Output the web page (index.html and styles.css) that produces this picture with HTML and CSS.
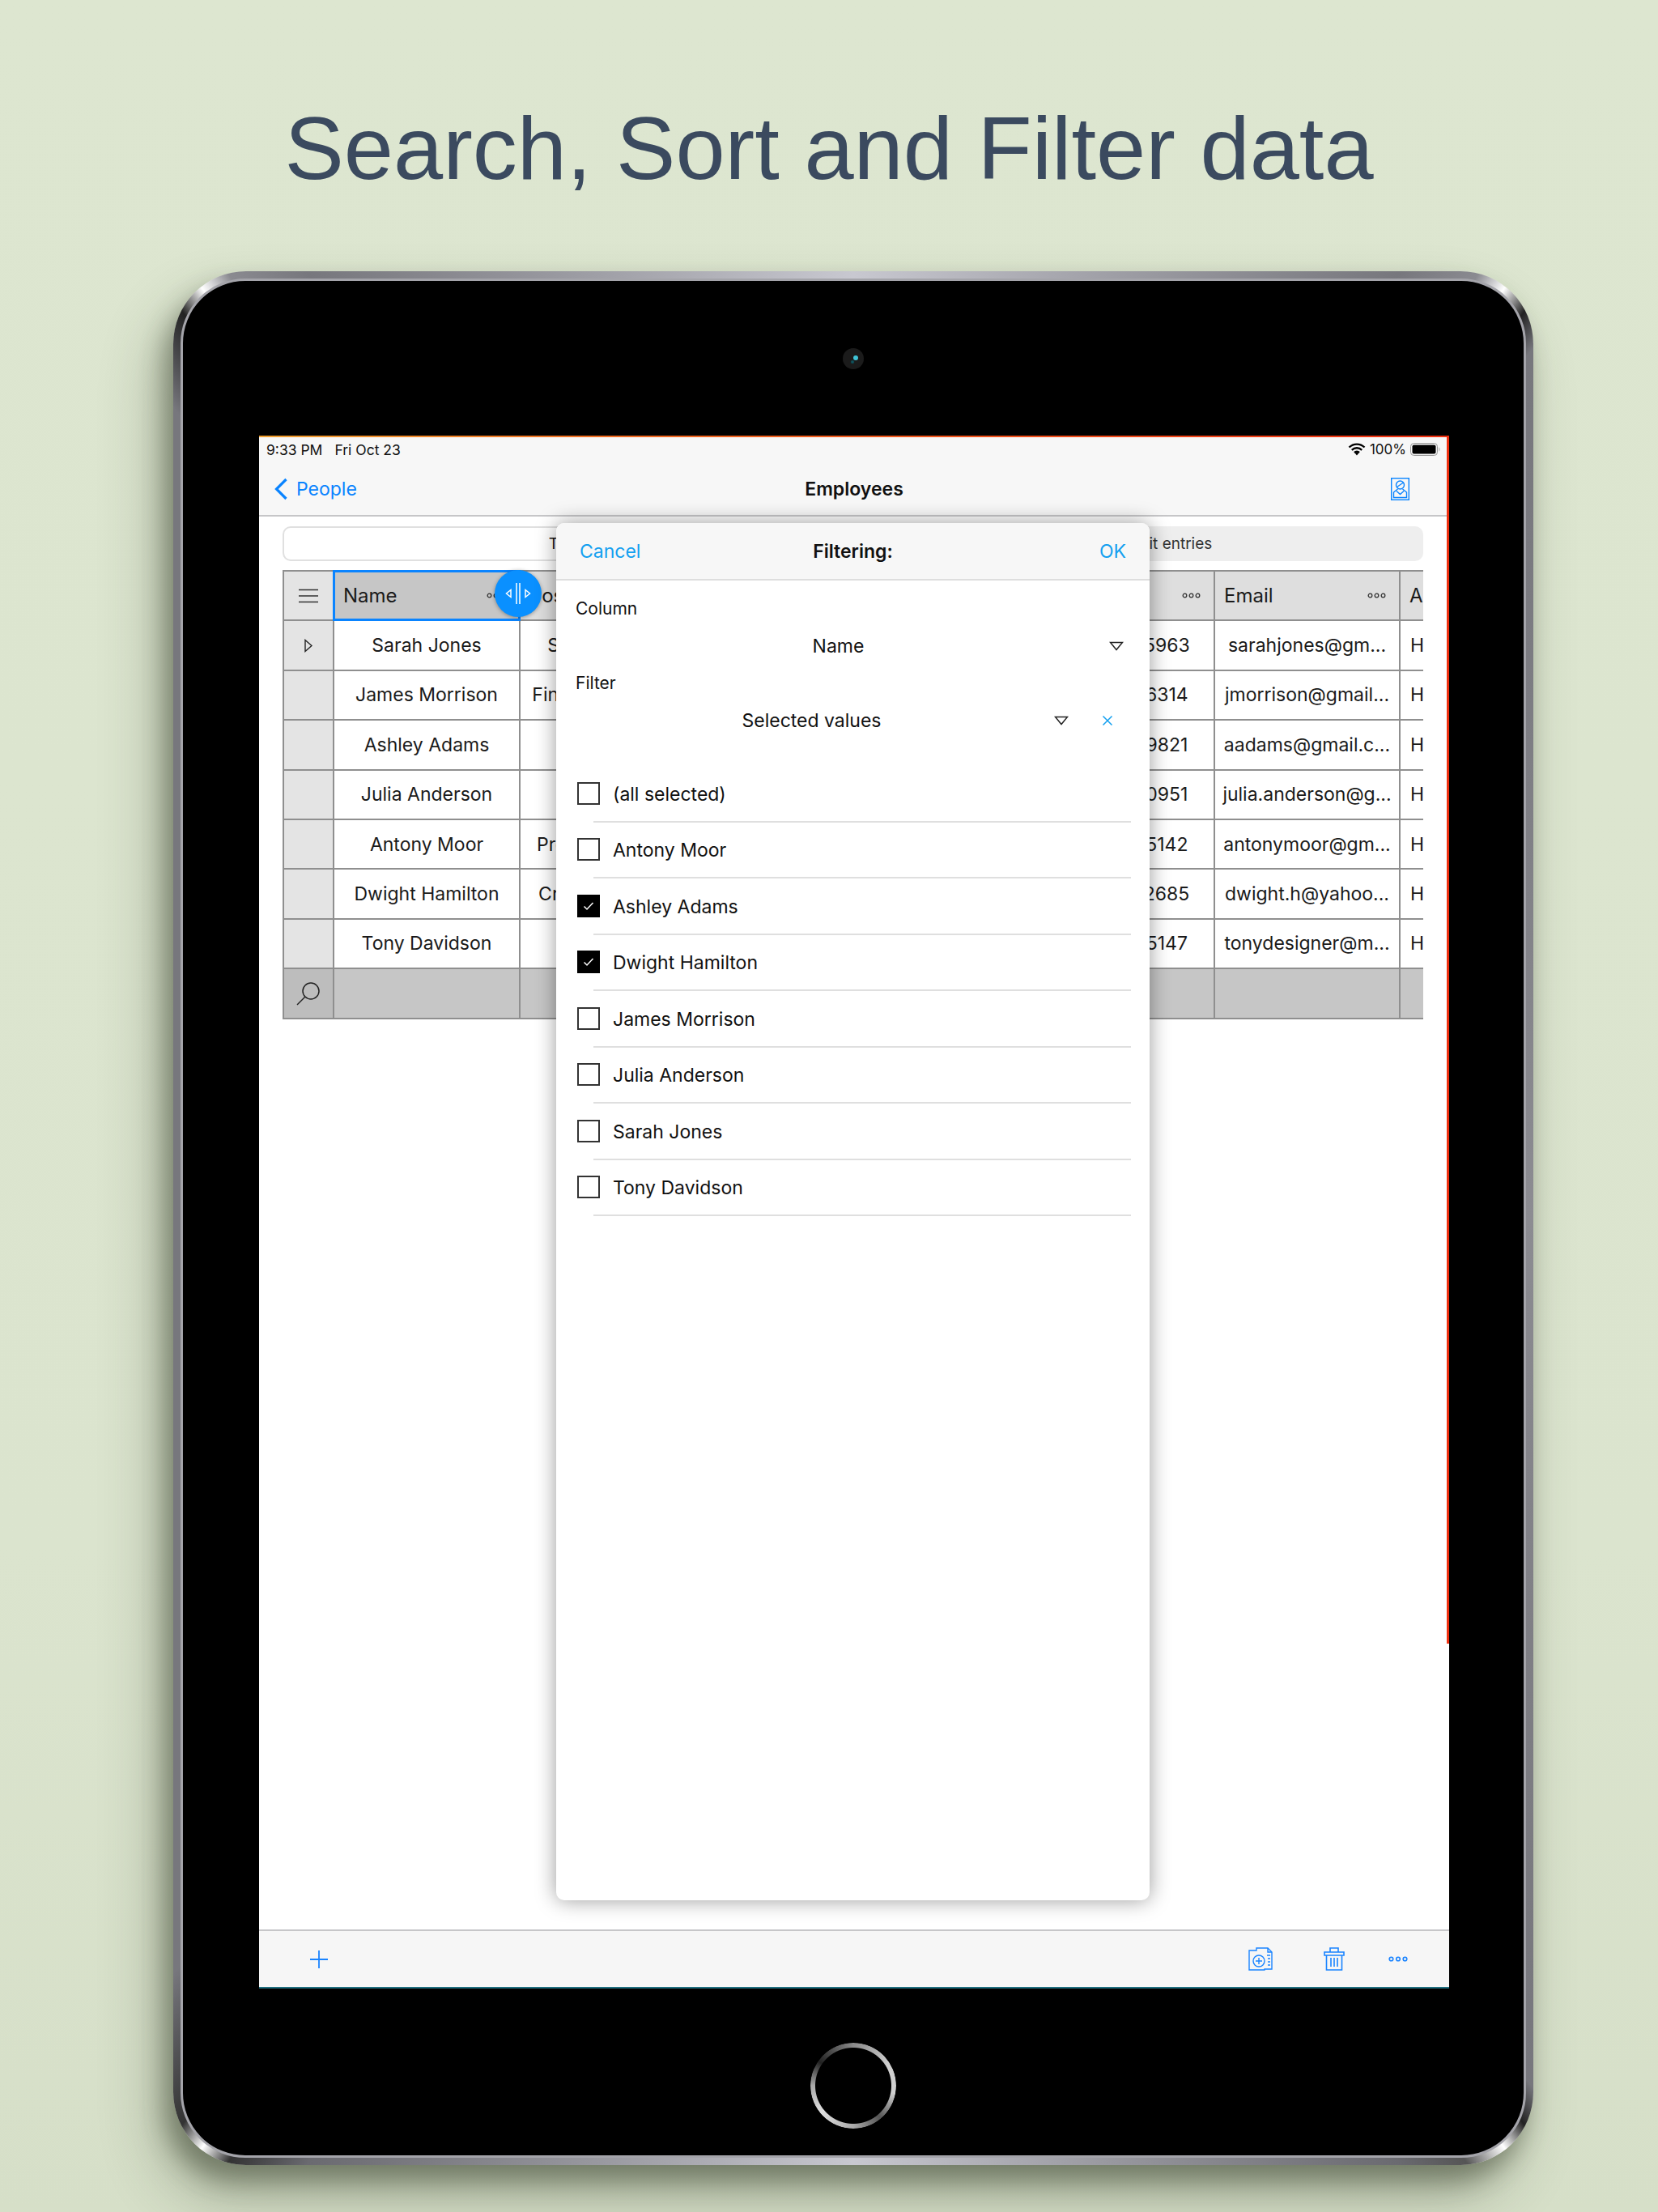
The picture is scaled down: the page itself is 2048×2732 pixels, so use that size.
FILE: index.html
```html
<!DOCTYPE html>
<html lang="en">
<head>
  <meta charset="UTF-8">
  <title>Search, Sort and Filter data</title>
  <link rel="stylesheet" href="styles.css">
</head>
<body>

<h1 class="headline">Search, Sort and Filter data</h1>

<div class="device">
  <div class="bezel">
    <div class="camera"><span class="lens"></span></div>

    <div class="screen">
      <div class="status-bar">
        <span class="status-time">9:33 PM</span>
        <span class="status-date">Fri Oct 23</span>
        <span class="status-right">
          <svg class="wifi" width="22" height="16" viewBox="0 0 22 16"><path d="M1.5 5.5a13.5 13.5 0 0 1 19 0M4.8 8.8a9 9 0 0 1 12.4 0M8 12a4.4 4.4 0 0 1 6 0" fill="none" stroke="#000" stroke-width="2.4"/><path d="M8.6 12.6 11 15.4l2.4-2.8a3.6 3.6 0 0 0-4.8 0z"/></svg>
          <span>100%</span>
          <svg width="38" height="16" viewBox="0 0 38 16"><rect x=".5" y=".5" width="33" height="15" rx="4" fill="none" stroke="#999"/><rect x="2.5" y="2.5" width="29" height="11" rx="2"/><path d="M35.5 5.5c1.2.4 1.2 4.6 0 5z" fill="#999"/></svg>
        </span>
      </div>

      <div class="nav-bar">
        <a class="nav-back">
          <svg width="18" height="28" viewBox="0 0 18 28"><path d="M15.5 2 3.5 14l12 12" fill="none" stroke="#0a84ff" stroke-width="3.2"/></svg>
          <span>People</span>
        </a>
        <span class="nav-title">Employees</span>
        <svg class="nav-icon" width="23" height="28" viewBox="0 0 23 28" fill="none" stroke="#0a84ff" stroke-width="1.4">
          <rect x=".7" y=".7" width="21.6" height="26.6"/>
          <circle cx="11.5" cy="9" r="5"/>
          <path d="M7.5 11.5 15.5 6M8.5 14 3.5 18v6.5h16V18l-5-4M7 16.5l4.5 4 4.5-4"/>
        </svg>
      </div>

      <div class="content">
        <div class="segments">
          <div class="segment segment-on">Table</div>
          <div class="segment segment-off">Add and edit entries</div>
        </div>

        <div class="table">
          <div class="cell head-menu">
            <svg width="24" height="18" viewBox="0 0 24 18" stroke="#333" stroke-width="1.5"><path d="M0 1.5h24M0 9h24M0 16.5h24"/></svg>
          </div>
          <div class="cell head head-selected"><span>Name</span><svg class="dots" width="23" height="7" viewBox="0 0 23 7" fill="none" stroke="#333" stroke-width="1.3"><circle cx="3.5" cy="3.5" r="2.3"/><circle cx="11.5" cy="3.5" r="2.3"/><circle cx="19.5" cy="3.5" r="2.3"/></svg></div>
          <div class="cell head"><span>Position</span></div>
          <div class="cell head"></div>
          <div class="cell head head-end"><svg class="dots" width="23" height="7" viewBox="0 0 23 7" fill="none" stroke="#333" stroke-width="1.3"><circle cx="3.5" cy="3.5" r="2.3"/><circle cx="11.5" cy="3.5" r="2.3"/><circle cx="19.5" cy="3.5" r="2.3"/></svg></div>
          <div class="cell head"><span>Email</span><svg class="dots" width="23" height="7" viewBox="0 0 23 7" fill="none" stroke="#333" stroke-width="1.3"><circle cx="3.5" cy="3.5" r="2.3"/><circle cx="11.5" cy="3.5" r="2.3"/><circle cx="19.5" cy="3.5" r="2.3"/></svg></div>
          <div class="cell head"><span>A</span></div>

          <div class="cell row-head"><svg width="10" height="17" viewBox="0 0 10 17"><path d="M1 1.5 9 8.500 1 15.500z" fill="none" stroke="#222" stroke-width="1.4"/></svg></div>
          <div class="cell">Sarah Jones</div><div class="cell">Sales Manager</div><div class="cell"></div><div class="cell cell-phone">(555) 555-5963</div><div class="cell">sarahjones@gm...</div><div class="cell cell-left">H</div>

          <div class="cell row-head"></div>
          <div class="cell">James Morrison</div><div class="cell">Financial Manager</div><div class="cell"></div><div class="cell cell-phone">(555) 555-6314</div><div class="cell">jmorrison@gmail...</div><div class="cell cell-left">H</div>

          <div class="cell row-head"></div>
          <div class="cell">Ashley Adams</div><div class="cell"></div><div class="cell"></div><div class="cell cell-phone">(555) 555-9821</div><div class="cell">aadams@gmail.c...</div><div class="cell cell-left">H</div>

          <div class="cell row-head"></div>
          <div class="cell">Julia Anderson</div><div class="cell"></div><div class="cell"></div><div class="cell cell-phone">(555) 555-0951</div><div class="cell">julia.anderson@g...</div><div class="cell cell-left">H</div>

          <div class="cell row-head"></div>
          <div class="cell">Antony Moor</div><div class="cell">Product Manager</div><div class="cell"></div><div class="cell cell-phone">(555) 555-5142</div><div class="cell">antonymoor@gm...</div><div class="cell cell-left">H</div>

          <div class="cell row-head"></div>
          <div class="cell">Dwight Hamilton</div><div class="cell">Creative Director</div><div class="cell"></div><div class="cell cell-phone">(555) 555-2685</div><div class="cell">dwight.h@yahoo...</div><div class="cell cell-left">H</div>

          <div class="cell row-head"></div>
          <div class="cell">Tony Davidson</div><div class="cell"></div><div class="cell"></div><div class="cell cell-phone">(555) 555-5147</div><div class="cell">tonydesigner@m...</div><div class="cell cell-left">H</div>

          <div class="cell search-head">
            <svg width="30" height="30" viewBox="0 0 30 30" fill="none" stroke="#222" stroke-width="1.5"><circle cx="18" cy="12" r="10"/><path d="M11 19 1 29"/></svg>
          </div>
          <div class="cell search-cell"></div><div class="cell search-cell"></div><div class="cell search-cell"></div><div class="cell search-cell"></div><div class="cell search-cell"></div><div class="cell search-cell"></div>
        </div>

        <div class="resize-handle">
          <svg width="32" height="32" viewBox="0 0 32 32" fill="none" stroke="#fff" stroke-width="1.500"><path d="M7 11.500v9L1.500 16zM25 11.500v9l5.500-4.500zM14 3v26M18 3v26"/></svg>
        </div>
      </div>

      <div class="toolbar">
        <svg class="tool-plus" width="22" height="22" viewBox="0 0 22 22" stroke="#1a84ff" stroke-width="1.8"><path d="M11 0v22M0 11h22"/></svg>
        <svg class="tool-doc" width="30" height="29" viewBox="0 0 30 29" fill="none" stroke="#1a84ff" stroke-width="1.400"><path d="M10 4V1h14l5 5v21h-9v1H1V4z"/><path d="M24 1v5h5"/><circle cx="13" cy="17" r="7"/><path d="M13 13v8M9 17h8M23 10h4M24 14h3M24 18h3M24 22h3"/></svg>
        <svg class="tool-trash" width="26" height="29" viewBox="0 0 26 29" fill="none" stroke="#1a84ff" stroke-width="1.600"><path d="M1 6h24v4H1zM8 6V1h10v5M3.500 10v18h19V10M9 13v11M13 13v11M17 13v11"/></svg>
        <svg class="tool-dots" width="24" height="7" viewBox="0 0 24 7" fill="none" stroke="#1a84ff" stroke-width="1.600"><circle cx="3.500" cy="3.500" r="2.300"/><circle cx="12" cy="3.500" r="2.300"/><circle cx="20.500" cy="3.500" r="2.300"/></svg>
      </div>

      <div class="modal">
        <div class="modal-head">
          <span class="modal-link">Cancel</span>
          <span class="modal-title">Filtering:</span>
          <span class="modal-link modal-link-end">OK</span>
        </div>

        <div class="modal-label modal-label-first">Column</div>
        <div class="picker">
          <span class="picker-value">Name</span>
          <svg width="18" height="12" viewBox="0 0 18 12"><path d="M1.500 1.500h15L9 10.500z" fill="none" stroke="#222" stroke-width="1.500"/></svg>
        </div>

        <div class="modal-label">Filter</div>
        <div class="picker picker-filter">
          <span class="picker-value">Selected values</span>
          <svg width="18" height="12" viewBox="0 0 18 12"><path d="M1.500 1.500h15L9 10.500z" fill="none" stroke="#222" stroke-width="1.500"/></svg>
          <svg class="picker-clear" width="14" height="14" viewBox="0 0 14 14"><path d="M1.500 1.500l11 11M12.500 1.500l-11 11" stroke="#14a0f0" stroke-width="1.500"/></svg>
        </div>

        <ul class="check-list">
          <li class="check-row"><span class="box"></span><span class="check-text">(all selected)</span></li>
          <li class="check-row"><span class="box"></span><span class="check-text">Antony Moor</span></li>
          <li class="check-row"><span class="box box-on"><svg width="14" height="12" viewBox="0 0 14 12"><path d="M1.500 6.500 5 10l7.500-8" fill="none" stroke="#fff" stroke-width="1.500"/></svg></span><span class="check-text">Ashley Adams</span></li>
          <li class="check-row"><span class="box box-on"><svg width="14" height="12" viewBox="0 0 14 12"><path d="M1.500 6.500 5 10l7.500-8" fill="none" stroke="#fff" stroke-width="1.500"/></svg></span><span class="check-text">Dwight Hamilton</span></li>
          <li class="check-row"><span class="box"></span><span class="check-text">James Morrison</span></li>
          <li class="check-row"><span class="box"></span><span class="check-text">Julia Anderson</span></li>
          <li class="check-row"><span class="box"></span><span class="check-text">Sarah Jones</span></li>
          <li class="check-row"><span class="box"></span><span class="check-text">Tony Davidson</span></li>
        </ul>
      </div>
    </div>

    <div class="home-button"></div>
  </div>
</div>

</body>
</html>
```

FILE: styles.css
```css
* {
  box-sizing: border-box;
}

body {
  margin: 0;
  height: 2732px;
  overflow: hidden;
  background: linear-gradient(#dde6d0, #dbe4ce 70%, #d6dfc8);
  font-family: "Inter", "Noto Sans", sans-serif;
  color: #111;
}

.headline {
  margin: 0;
  height: 335px;
  padding-top: 112px;
  text-align: center;
  font-family: "Liberation Sans", sans-serif;
  font-weight: 400;
  font-size: 110px;
  line-height: 142px;
  color: #3b4a5f;
}

/* device frame */
.device {
  width: 1680px;
  height: 2339px;
  margin-left: 214px;
  padding: 9px;
  border-radius: 90px;
  background: conic-gradient(#c8c8d0 0deg, #77777d 30deg, #8a8a90 33.5deg, #fff 35deg, #222 36.5deg, #77777d 38deg, #8c8c92 90deg, #77777d 142deg, #222 143.5deg, #fff 145deg, #555 147deg, #6a6a70 150deg, #c8c8d0 180deg, #6a6a70 210deg, #333 213.5deg, #fff 215deg, #333 216.5deg, #77777d 222deg, #77777d 320deg, #222 323.5deg, #fff 325deg, #8a8a90 326.5deg, #77777d 330deg, #c8c8d0 360deg);
  box-shadow: -10px 20px 30px rgba(50, 60, 40, 0.45), -20px 40px 70px rgba(50, 60, 40, 0.3);
}

.bezel {
  height: 100%;
  display: flex;
  flex-direction: column;
  align-items: center;
  border: 3px solid #a4a4aa;
  border-radius: 80px;
  background: #000;
}

.camera {
  width: 26px;
  height: 26px;
  margin-top: 83px;
  margin-bottom: 82px;
  border-radius: 50%;
  background: #1b1b1b;
  display: flex;
  align-items: center;
  justify-content: center;
}

.lens {
  width: 6px;
  height: 6px;
  margin: -2px 0 0 6px;
  border-radius: 50%;
  background: #3fc3d6;
  box-shadow: -4px 5px 1px -1px #0d5560;
}

.home-button {
  width: 106px;
  height: 106px;
  margin-top: 67px;
  border-radius: 50%;
  background: conic-gradient(#8a8a8a 0deg, #cfcfcf 60deg, #d0d0d0 100deg, #555 140deg, #aaa 180deg, #e0e0e0 230deg, #aaa 270deg, #222 305deg, #8a8a8a 360deg);
  -webkit-mask: radial-gradient(circle, transparent 46.500px, #000 47.500px);
  mask: radial-gradient(circle, transparent 46.500px, #000 47.500px);
}

/* screen */
.screen {
  position: relative;
  width: 1470px;
  height: 1918px;
  margin-left: 2px;
  display: flex;
  flex-direction: column;
  background: #fff;
  overflow: hidden;
}

.screen::before {
  content: "";
  position: absolute;
  left: 0;
  right: 0;
  top: 0;
  height: 2px;
  background: linear-gradient(90deg, #f0a030, #f06a20 30%, #f03010);
  z-index: 3;
}

.screen::after {
  content: "";
  position: absolute;
  right: 0;
  top: 0;
  width: 3px;
  height: 1492px;
  background: #f03010;
  z-index: 3;
}

.status-bar {
  height: 40px;
  padding: 0 10px 6px 9px;
  display: flex;
  align-items: center;
  gap: 15px;
  background: #f7f7f7;
  font-size: 17.5px;
  color: #111;
}

.status-right {
  margin-left: auto;
  display: flex;
  align-items: center;
  gap: 5px;
  font-size: 17px;
}

.nav-bar {
  height: 60px;
  padding: 0 18px 6px;
  display: grid;
  grid-template-columns: 1fr auto 1fr;
  align-items: center;
  background: #f7f7f7;
  border-bottom: 2px solid #c6c6c8;
}

.nav-back {
  display: flex;
  align-items: center;
  gap: 10px;
  font-size: 23px;
  color: #0a84ff;
}

.nav-title {
  font-size: 23px;
  font-weight: 600;
}

.nav-icon {
  justify-self: end;
  margin-right: 31px;
}

/* table area */
.content {
  position: relative;
  flex: 1;
  padding: 12px 32px 0 29px;
}

.segments {
  display: flex;
  height: 43px;
  font-size: 19px;
  margin-bottom: 11px;
}

.segment {
  flex: 1;
  display: flex;
  align-items: center;
  justify-content: center;
}

.segment-on {
  background: #fff;
  border: 2px solid #e0e0e0;
  border-radius: 10px 0 0 10px;
}

.segment-off {
  background: #eeeeee;
  border-radius: 0 10px 10px 0;
  color: #333;
}

.table {
  display: grid;
  grid-template-columns: 62px 230px 230px 399px 229px 229px 60px;
  grid-template-rows: 63.4px;
  grid-auto-rows: 61.4px;
  overflow: hidden;
  border-left: 2px solid #8f8f8f;
  font-size: 23px;
}

.cell {
  display: flex;
  align-items: center;
  justify-content: center;
  white-space: nowrap;
  overflow: hidden;
  border-right: 2px solid #8f8f8f;
  border-bottom: 2px solid #8f8f8f;
  color: #1a1a1a;
}

.head {
  justify-content: space-between;
  padding: 0 16px 0 11px;
  background: #dedede;
  border-top: 2px solid #8f8f8f;
  font-size: 24px;
}

.head-end {
  justify-content: flex-end;
}

.head-selected {
  position: relative;
  margin-left: -2px;
  padding-left: 10px;
  border: 3px solid #0a84ff;
  background: #c6c6c6;
}

.head-menu {
  border-top: 2px solid #8f8f8f;
}

.head-menu,
.row-head {
  background: #e4e4e4;
}

.cell-phone {
  padding-right: 6px;
}

.cell-left {
  justify-content: flex-start;
  padding-left: 12px;
}

.search-head {
  background: #bdbdbd;
}

.search-cell {
  background: #c6c6c6;
}

.resize-handle {
  position: absolute;
  left: 291px;
  top: 66px;
  width: 58px;
  height: 58px;
  display: flex;
  align-items: center;
  justify-content: center;
  border-radius: 50%;
  background: #0a90ff;
  box-shadow: 0 1px 5px rgba(0, 0, 0, 0.35);
}

.toolbar {
  position: relative;
  height: 73px;
  display: flex;
  align-items: center;
  background: #f6f6f6;
  border-top: 2px solid #c6c6c8;
  border-bottom: 2px solid #1f6f80;
  padding: 0 51px 0 63px;
}

.tool-doc {
  margin-left: auto;
}

.tool-trash {
  margin-left: 63px;
}

.tool-dots {
  margin-left: 54px;
}

/* filter dialog */
.modal {
  position: absolute;
  left: 367px;
  top: 108px;
  width: 733px;
  height: 1701px;
  border-radius: 10px;
  background: #fff;
  box-shadow: 0 0 26px rgba(0, 0, 0, 0.4);
  z-index: 2;
}

.modal-head {
  height: 71px;
  padding: 0 29px;
  display: grid;
  grid-template-columns: 1fr auto 1fr;
  align-items: center;
  border-radius: 10px 10px 0 0;
  background: #f7f7f7;
  border-bottom: 2px solid #dedede;
  font-size: 23px;
}

.modal-link {
  color: #14a0f0;
}

.modal-link-end {
  justify-self: end;
}

.modal-title {
  font-weight: 600;
}

.modal-label {
  padding-left: 24px;
  font-size: 21px;
  height: 28px;
  line-height: 28px;
  margin-top: 4px;
}

.modal-label-first {
  margin-top: 21px;
}

.picker {
  height: 56px;
  margin-top: 4px;
  padding-right: 32px;
  display: flex;
  align-items: center;
  font-size: 23px;
}

.picker-value {
  flex: 1;
  padding-left: 14px;
  text-align: center;
}

.picker-filter {
  padding-right: 45px;
}

.picker-filter .picker-value {
  padding-left: 16px;
}

.picker-clear {
  margin-left: 41px;
}

.check-list {
  list-style: none;
  margin: 28px 0 0;
  padding: 0 23px 0 26px;
}

.check-row {
  position: relative;
  height: 69.500px;
  display: flex;
  align-items: center;
  gap: 16px;
  font-size: 23px;
}

.check-row::after {
  content: "";
  position: absolute;
  left: 20px;
  right: 0;
  bottom: 0;
  height: 2px;
  background: #dfdfdf;
}

.box {
  width: 28px;
  height: 28px;
  margin-top: -2px;
  border: 2px solid #333;
  display: flex;
  align-items: center;
  justify-content: center;
}

.box-on {
  background: #000;
  border-color: #000;
}
```
